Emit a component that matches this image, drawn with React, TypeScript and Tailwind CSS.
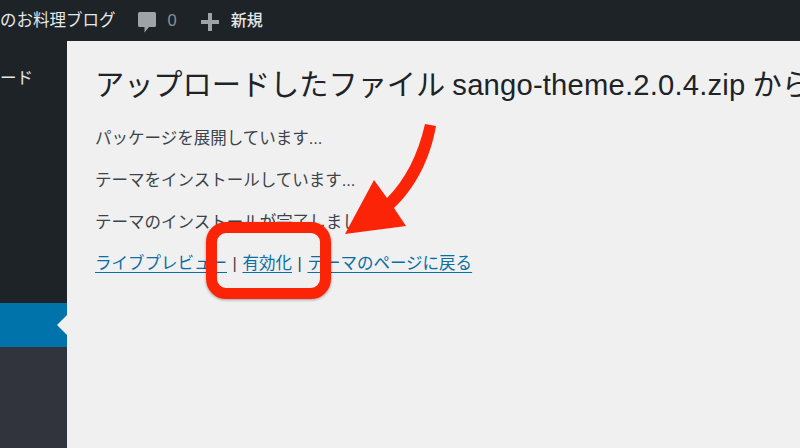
export default function App() {
    const font = "font-['Liberation_Sans','Noto_Sans_CJK_JP',sans-serif]";

    return (
        <div className={`relative w-[800px] h-[448px] overflow-hidden bg-[#f0f0f1] flex flex-col ${font}`}>
            {/* admin bar */}
            <div className="h-[41px] shrink-0 bg-[#1d2327] flex items-center text-[16.5px] text-[#e6e7e8]">
                <span className="pb-[1px]">のお料理ブログ</span>
                <svg className="ml-[22px] mt-[4px]" width="18" height="21" viewBox="0 0 18 21">
                    <path d="M1.500 0h15a1.500 1.500 0 0 1 1.500 1.500v12a1.500 1.500 0 0 1-1.500 1.500h-5.500l-4.500 5.500v-5.500h-5a1.500 1.500 0 0 1-1.500-1.500v-12a1.500 1.500 0 0 1 1.500-1.500z" fill="#9ea3a8" />
                </svg>
                <span className="ml-[12px] text-[#8c8f94]">0</span>
                <svg className="ml-[24px] mt-[3px]" width="18" height="18" viewBox="0 0 18 18">
                    <path d="M7 0h4v7h7v4h-7v7h-4v-7h-7v-4h7z" fill="#9ea3a8" />
                </svg>
                <span className="ml-[12px] text-[16px] font-medium">新規</span>
            </div>

            <div className="flex flex-1 min-h-0">
                {/* side menu */}
                <div className="w-[67px] shrink-0 flex flex-col bg-[#1d2327]">
                    <div className="h-[262px] pt-[25px] text-[16.5px] leading-[24px] text-[#e6e7e8]">ード</div>
                    <div className="relative h-[44px] bg-[#0073aa]">
                        <div className="absolute right-0 top-[12px] w-0 h-0 border-y-[10px] border-y-transparent border-r-[10px] border-r-[#f0f0f1]" />
                    </div>
                    <div className="flex-1 bg-[#32343d]" />
                </div>

                {/* content */}
                <div className="flex-1 min-w-0 pl-[28px] pt-[24px] text-[#3c434a]">
                    <h1 className="text-[29.2px] leading-[40px] text-[#1d2327] whitespace-nowrap [word-spacing:-1px]">
                        アップロードしたファイル <span className="tracking-[0.2px]">sango-theme.2.0.4.zip</span> から
                    </h1>
                    <p className="mt-[22px] text-[16.5px] leading-[22px]">パッケージを展開しています...</p>
                    <p className="mt-[20px] text-[16.5px] leading-[22px]">テーマをインストールしています...</p>
                    <p className="mt-[20px] text-[16.5px] leading-[22px]">テーマのインストールが完了しました。</p>
                    <p className="mt-[19px] text-[16.5px] leading-[22px]">
                        <a href="#" className="text-[#0a6ea5] underline underline-offset-[3px]">ライブプレビュー</a>
                        <span className="px-[1px]"> | </span>
                        <a href="#" className="text-[#0a6ea5] underline underline-offset-[3px]">有効化</a>
                        <span className="px-[1px]"> | </span>
                        <a href="#" className="text-[#0a6ea5] underline underline-offset-[3px]">テーマのページに戻る</a>
                    </p>
                </div>
            </div>

            {/* red annotation */}
            <div className="absolute left-[206px] top-[222px] w-[125px] h-[77px] rounded-[20px] border-[11px] border-[#fb2407] shadow-[0_1px_3px_rgba(0,0,0,0.35)]" />
            <svg className="absolute left-[340px] top-[120px]" width="110" height="120" viewBox="0 0 110 120">
                <path d="M85 4 L96 6 C90 40 75 68 54 88 L66 106 L5 114 L34 60 L47 78 C65 60 78 35 85 4 Z" fill="#fb2407" />
            </svg>
        </div>
    );
}
